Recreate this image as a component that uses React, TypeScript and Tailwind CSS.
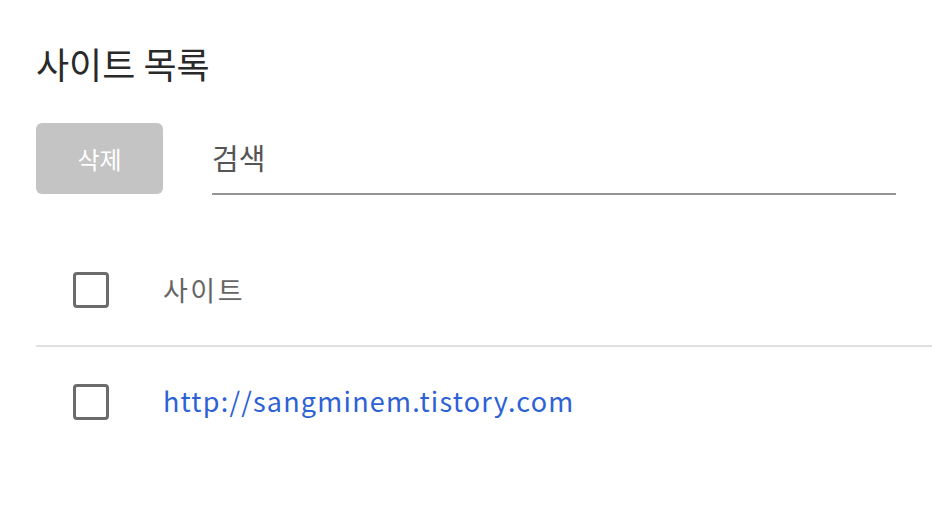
const font = { fontFamily: '"Noto Sans CJK KR", "Noto Sans", sans-serif' };

function Checkbox() {
  return <div className="h-[36px] w-[36px] shrink-0 rounded-[4px] border-[3px] border-[#6b6b6b]" />;
}

export default function App() {
  return (
    <div className="h-[512px] w-[932px] overflow-hidden bg-white pt-[38px]" style={font}>
      <h1 className="pl-[36px] text-[36px] leading-[50px] text-[#2a2a2a]">사이트 목록</h1>

      <div className="mt-[34px] flex items-center pl-[36px]">
        <button className="h-[71px] w-[127px] rounded-[6px] bg-[#c4c4c4] text-[24px] text-white">삭제</button>
        <div className="ml-[49px] mt-[2px] h-[71px] w-[684px] border-b-[2px] border-[#949494] pt-[12px] text-[29px] leading-[42px] text-[#555]">
          검색
        </div>
      </div>

      <div className="mt-[52px]">
        <div className="ml-[36px] flex h-[100px] items-center border-b-[2px] border-[#e0e0e0] pb-[12px]">
          <div className="ml-[37px]">
            <Checkbox />
          </div>
          <span className="ml-[54px] text-[27px] tracking-[2.5px] text-[#666]">사이트</span>
        </div>
        <div className="ml-[36px] flex h-[112px] items-start pt-[37px]">
          <div className="ml-[37px]">
            <Checkbox />
          </div>
          <a className="ml-[54px] -mt-[3px] text-[27px] tracking-[1.2px] text-[#2d62d4]">
            http://sangminem.tistory.com
          </a>
        </div>
      </div>
    </div>
  );
}
